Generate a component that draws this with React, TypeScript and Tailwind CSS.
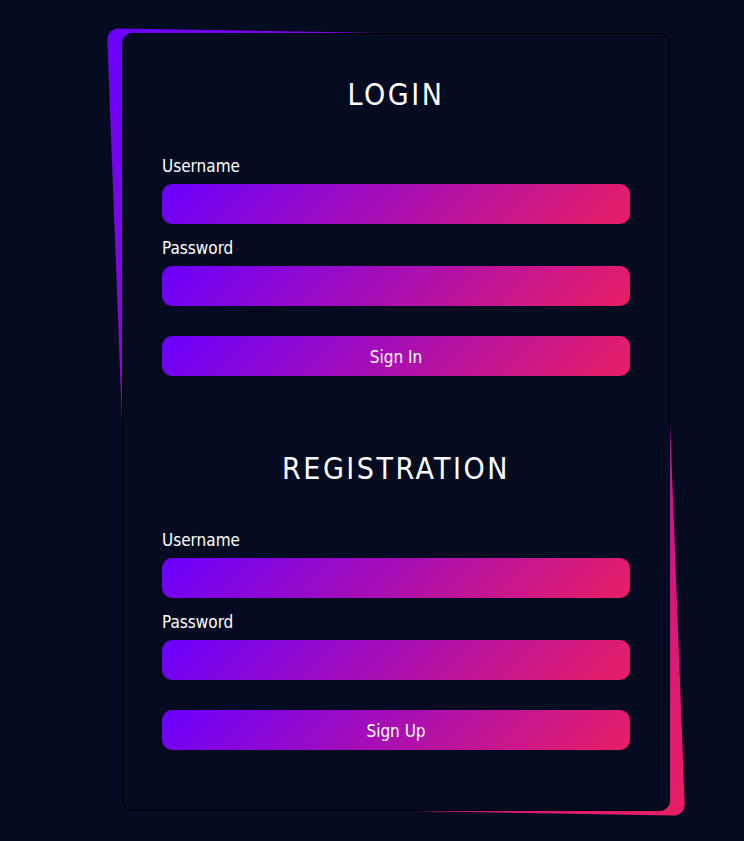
const fontStack = "font-['Liberation_Sans_Narrow','DejaVu_Sans_Condensed','Roboto_Condensed','Liberation_Sans',sans-serif]";

function Field({ label, type }: { label: string; type: string }) {
  return (
    <label className="block">
      <span className="block text-[17px] leading-[24px] text-white">{label}</span>
      <input
        type={type}
        className="mt-[6px] block h-[40px] w-full rounded-[10px] bg-linear-135/srgb from-[#6a00ff] to-[#e91e63] px-4 text-white outline-none"
      />
    </label>
  );
}

function Section({ title, action }: { title: string; action: string }) {
  return (
    <section>
      <h2 className="text-center text-[30px] leading-[40px] tracking-[2.5px] text-white">{title}</h2>
      <div className="mt-[39px] flex flex-col gap-[12px]">
        <Field label="Username" type="text" />
        <Field label="Password" type="password" />
      </div>
      <button
        type="button"
        className="mt-[30px] block h-[40px] w-full rounded-[10px] bg-linear-135/srgb from-[#6a00ff] to-[#e91e63] pt-[3px] text-[17px] text-white"
      >
        {action}
      </button>
    </section>
  );
}

export default function App() {
  return (
    <div className={`min-h-screen bg-[#050c21] pt-[33px] pl-[122px] ${fontStack}`}>
      <div className="relative h-[778px] w-[548px]">
        <div className="absolute inset-0 rounded-[12px] bg-linear-135/srgb from-[#6a00ff] to-[#e91e63] skew-x-[2.2deg] skew-y-[1deg]" />
        <div className="relative flex h-full flex-col gap-[73px] rounded-[10px] border border-black bg-[#050c21] px-[39px] pt-[41px]">
          <Section title="LOGIN" action="Sign In" />
          <Section title="REGISTRATION" action="Sign Up" />
        </div>
      </div>
    </div>
  );
}
